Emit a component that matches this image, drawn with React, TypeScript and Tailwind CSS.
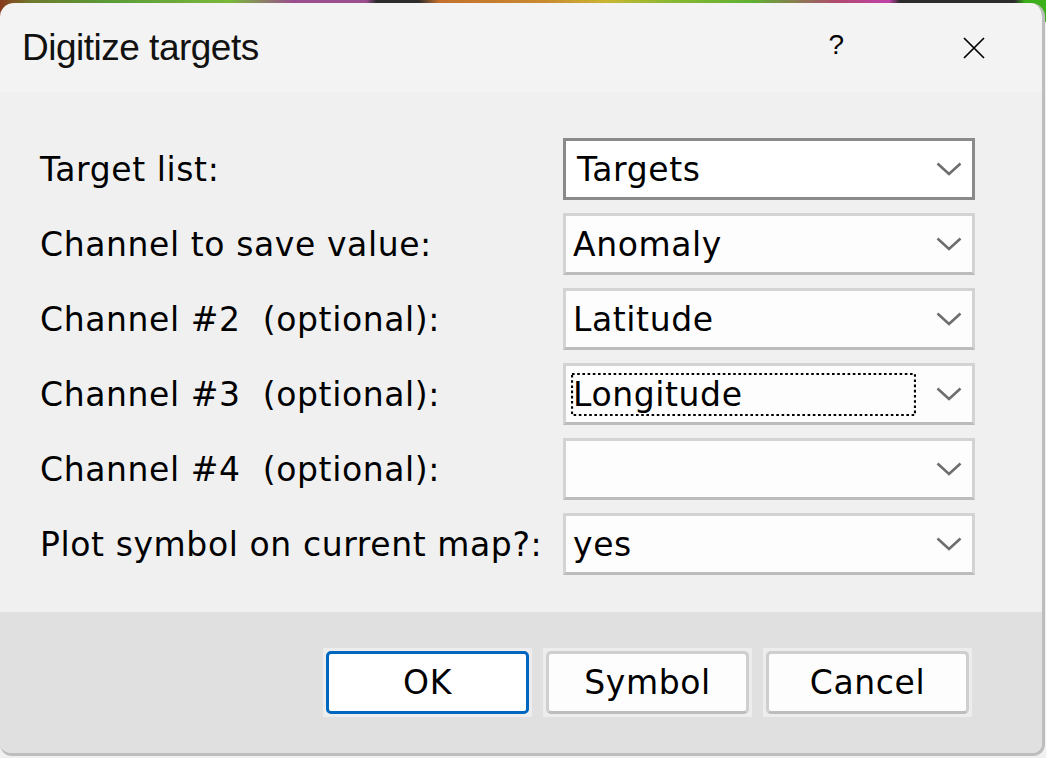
import React from "react";

const FONT = "font-['DejaVu_Sans',sans-serif] tracking-[0.6px]";

const Chevron = () => (
  <svg width="26" height="14" viewBox="0 0 26 14" className="shrink-0">
    <polyline
      points="1.5,1.5 13,12 24.5,1.5"
      fill="none"
      stroke="#6e6e6e"
      strokeWidth="2.6"
    />
  </svg>
);

interface ComboProps {
  value?: string;
  active?: boolean;
  focused?: boolean;
}

const Combo = ({ value, active, focused }: ComboProps) => (
  <div
    className={`w-[412px] h-[62px] border-[3px] flex items-center pr-[10px] ${
      active
        ? "border-[#8a8a8a] bg-white pl-[11px]"
        : "border-[#d3d3d3] border-b-[#bcbcbc] bg-[#fdfdfd] pl-[7px]"
    }`}
  >
    {focused ? (
      <div className="relative w-[345px] h-[43px] -ml-[2px] pl-[2px] flex items-center">
        <span className="text-[33px] leading-[33px] text-black">{value}</span>
        <svg
          className="absolute inset-0 pointer-events-none"
          width="345"
          height="43"
          viewBox="0 0 345 43"
        >
          <rect
            x="1"
            y="1"
            width="343"
            height="41"
            fill="none"
            stroke="#000"
            strokeWidth="2.2"
            strokeDasharray="2.6 2.6"
          />
        </svg>
      </div>
    ) : (
      <span className="text-[33px] leading-[33px] text-black">{value}</span>
    )}
    <div className="ml-auto">
      <Chevron />
    </div>
  </div>
);

const rows: { label: string; value: string; active?: boolean; focused?: boolean }[] = [
  { label: "Target list:", value: "Targets", active: true },
  { label: "Channel to save value:", value: "Anomaly" },
  { label: "Channel #2  (optional):", value: "Latitude" },
  { label: "Channel #3  (optional):", value: "Longitude", focused: true },
  { label: "Channel #4  (optional):", value: "" },
  { label: "Plot symbol on current map?:", value: "yes" },
];

const DialogButton = ({ label, primary }: { label: string; primary?: boolean }) => (
  <div className="p-[3px] bg-[#ededed]">
    <div
      className={`w-[203px] h-[63px] rounded-[5px] border-[3px] flex items-center justify-center text-[33px] leading-[33px] text-black ${
        primary
          ? "border-[#0067c0] bg-white"
          : "border-[#cfcfcf] border-b-[#bdbdbd] bg-[#fdfdfd]"
      }`}
    >
      {label}
    </div>
  </div>
);

export default function App() {
  return (
    <div
      className={`w-[1046px] h-[758px] overflow-hidden bg-[#f0f0f0] bg-no-repeat bg-[length:100%_22px] bg-[linear-gradient(90deg,#8a3a1e_0%,#6e7a2c_3%,#5a9a38_10%,#7ab83a_22%,#9a4e8e_28%,#9a4e8e_35%,#2c2c2c_36%,#2c2c2c_40%,#c4702c_42%,#c98a30_52%,#c9b632_58%,#8ab832_64%,#5fb032_72%,#b04a6e_80%,#c040a8_85%,#2c2c2c_86%,#2c2c2c_97%,#3cb01a_98%,#3cb01a_100%)] ${FONT}`}
    >
      <div className="mt-[3px] w-[1045px] h-[753px] rounded-t-[14px] rounded-b-[12px] border-r-[3px] border-b-[3px] border-[#bdbdbd] overflow-hidden flex flex-col">
        {/* title bar */}
        <div className="h-[89px] shrink-0 bg-[#f3f3f3] flex items-start">
          <div className="pl-[22px] pt-[26px] font-['Liberation_Sans',sans-serif] text-[37px] leading-[38px] tracking-[-0.5px] text-[#111]">
            Digitize targets
          </div>
          <div className="ml-auto flex">
            <div className="w-[137px] flex justify-center pt-[28px] font-['Liberation_Sans',sans-serif] text-[28px] leading-[28px] text-black">
              ?
            </div>
            <div className="w-[137px] flex justify-center pt-[34px]">
              <svg width="24" height="22" viewBox="0 0 24 22">
                <path d="M2 1 L22 21 M22 1 L2 21" stroke="#000" strokeWidth="1.7" fill="none" />
              </svg>
            </div>
          </div>
        </div>

        {/* form */}
        <div className="h-[520px] shrink-0 bg-[#f0f0f0] pt-[46px] pl-[40px] flex flex-col gap-[13px]">
          {rows.map((r) => (
            <div key={r.label} className="flex items-center h-[62px]">
              <div className="w-[523px] text-[33px] leading-[33px] text-black whitespace-pre">
                {r.label}
              </div>
              <Combo value={r.value} active={r.active} focused={r.focused} />
            </div>
          ))}
        </div>

        {/* footer */}
        <div className="flex-1 bg-[#e0e0e0] flex justify-end items-start pt-[36px] pr-[70px] gap-[11px]">
          <DialogButton label="OK" primary />
          <DialogButton label="Symbol" />
          <DialogButton label="Cancel" />
        </div>
      </div>
    </div>
  );
}
